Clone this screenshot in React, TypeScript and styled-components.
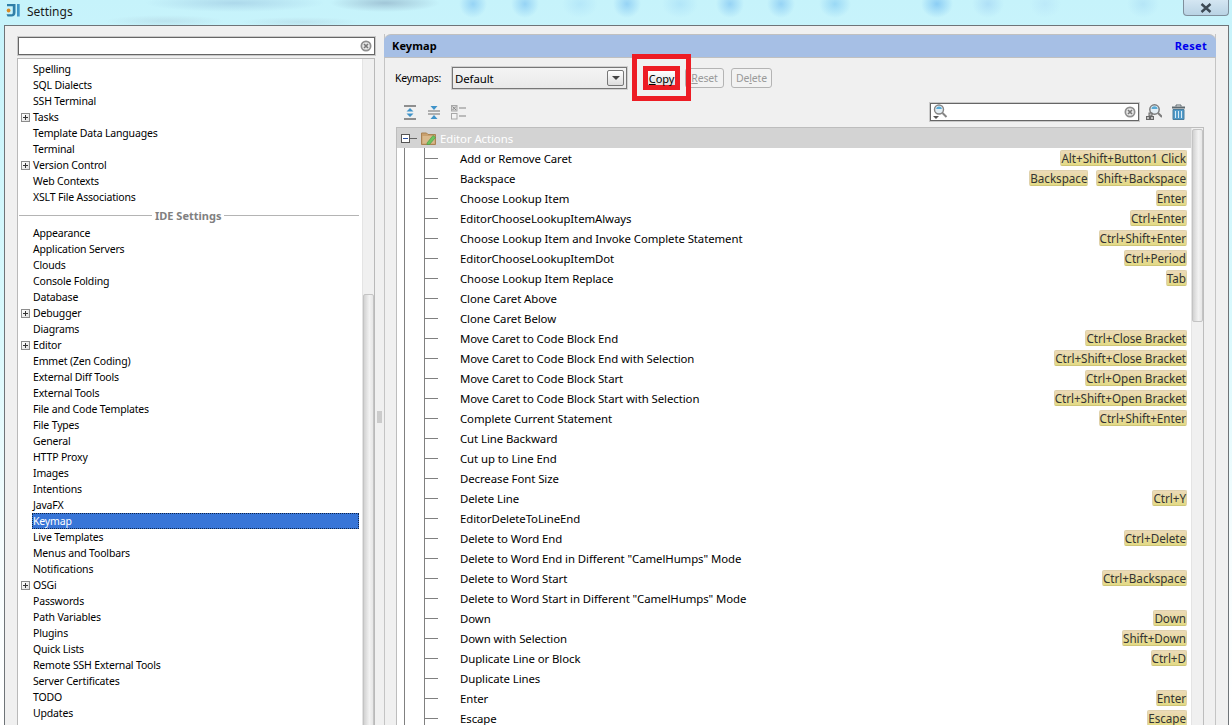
import React from 'react';
import styled, { createGlobalStyle } from 'styled-components';

const GlobalStyle = createGlobalStyle`
  html, body {
    margin: 0;
    padding: 0;
    background: #dff4fb;
  }
  * {
    box-sizing: border-box;
  }
`;

const Screen = styled.div`
  width: 1232px;
  height: 725px;
  overflow: hidden;
  display: flex;
  flex-direction: column;
  font-family: 'Noto Sans', Tahoma, sans-serif;
  font-size: 10.5px;
  letter-spacing: -0.17px;
  color: #000;
  background:
    radial-gradient(ellipse 14px 14px at 473px 4px, rgba(110, 185, 240, 0.55), transparent),
    radial-gradient(ellipse 14px 14px at 525px 4px, rgba(110, 185, 240, 0.55), transparent),
    radial-gradient(ellipse 18px 14px at 580px 4px, rgba(150, 210, 245, 0.35), transparent),
    radial-gradient(ellipse 14px 14px at 627px 4px, rgba(110, 185, 240, 0.55), transparent),
    radial-gradient(ellipse 18px 14px at 680px 4px, rgba(140, 205, 245, 0.35), transparent),
    radial-gradient(ellipse 14px 14px at 730px 4px, rgba(110, 185, 240, 0.55), transparent),
    radial-gradient(ellipse 14px 14px at 781px 4px, rgba(110, 185, 240, 0.55), transparent),
    radial-gradient(ellipse 16px 14px at 835px 4px, rgba(110, 190, 240, 0.5), transparent),
    radial-gradient(ellipse 16px 14px at 937px 4px, rgba(100, 180, 240, 0.6), transparent),
    radial-gradient(ellipse 16px 14px at 988px 4px, rgba(140, 195, 240, 0.4), transparent),
    radial-gradient(ellipse 16px 14px at 1045px 4px, rgba(170, 215, 245, 0.35), transparent),
    radial-gradient(ellipse 16px 14px at 1143px 4px, rgba(150, 205, 240, 0.35), transparent),
    radial-gradient(ellipse 60px 6px at 165px 21px, rgba(150, 170, 190, 0.22), transparent),
    radial-gradient(ellipse 60px 5px at 300px 22px, rgba(150, 170, 190, 0.22), transparent),
    radial-gradient(ellipse 90px 9px at 235px 3px, rgba(120, 160, 200, 0.32), transparent),
    radial-gradient(ellipse 55px 9px at 385px 3px, rgba(110, 135, 165, 0.42), transparent),
    linear-gradient(180deg, #c6f3fb 0%, #d9f9fd 45%, #f6fdfe 75%, #ffffff 100%);
`;

const TitleBar = styled.div`
  height: 25px;
  flex: none;
  display: flex;
  align-items: flex-start;
  padding-left: 6px;
`;

const LogoSlot = styled.span`
  margin-top: 4px;
  display: flex;
`;

const TitleText = styled.span`
  margin: 3px 0 0 6px;
  font-size: 12px;
  letter-spacing: 0;
  color: #1a1a1a;
`;

const CloseButton = styled.div`
  width: 46px;
  height: 16px;
  margin-left: auto;
  margin-right: 3px;
  border: 1px solid #7f8f9c;
  border-top: none;
  border-radius: 0 0 4px 4px;
  background: linear-gradient(180deg, #d4e6f2, #b9d3e4);
  display: flex;
  align-items: center;
  justify-content: center;
`;

const Dialog = styled.div`
  flex: 1;
  min-height: 0;
  margin: 0 3px 0 4px;
  padding: 8px 12px 0 13px;
  background: #f0f0f0;
  border: 1px solid #6f7478;
  border-bottom: none;
  display: flex;
`;

const LeftColumn = styled.div`
  width: 357px;
  flex: none;
  display: flex;
  flex-direction: column;
  margin-top: 3px;
`;

const SearchField = styled.div<{ $width?: number }>`
  height: 18px;
  width: ${(p) => (p.$width ? `${p.$width}px` : '100%')};
  flex: none;
  background: #fff;
  border: 1px solid #666;
  outline: 1px solid #c9c9c9;
  display: flex;
  align-items: center;
  justify-content: space-between;
  padding: 0 2px 0 1px;
`;

const TreeBox = styled.div`
  flex: 1;
  min-height: 0;
  margin-top: 3px;
  margin-left: -1px;
  border: 1px solid #b9b9b9;
  border-bottom: none;
  background: #fff;
  display: flex;
  overflow: hidden;
`;

const TreeList = styled.div`
  flex: 1;
  min-width: 0;
  padding: 2px 3px 0 1px;
`;

const TreeItem = styled.div`
  height: 16px;
  line-height: 17px;
  display: flex;
  align-items: center;
  white-space: nowrap;
`;

const ExpanderSlot = styled.span`
  width: 13px;
  flex: none;
  display: flex;
  justify-content: center;
`;

const Expander = styled.span`
  width: 9px;
  height: 9px;
  border: 1px solid #8c8c8c;
  background: linear-gradient(135deg, #fff, #dfdfdf);
  position: relative;
  &::before {
    content: '';
    position: absolute;
    left: 1px;
    right: 1px;
    top: 3px;
    height: 1px;
    background: #333;
  }
  &::after {
    content: '';
    position: absolute;
    top: 1px;
    bottom: 1px;
    left: 3px;
    width: 1px;
    background: #333;
  }
`;

const ItemLabel = styled.span<{ $selected?: boolean }>`
  flex: 1;
  height: 16px;
  padding-left: 1px;
  color: ${(p) => (p.$selected ? '#fff' : '#000')};
  background: ${(p) => (p.$selected ? '#3875d7' : 'transparent')};
  outline: ${(p) => (p.$selected ? '1px dotted #10254a' : 'none')};
  outline-offset: -1px;
`;

const SectionRow = styled.div`
  height: 20px;
  display: flex;
  align-items: center;
  gap: 3px;
  font-size: 11px;
  letter-spacing: 0;
  font-weight: 700;
  color: #808080;
  &::before,
  &::after {
    content: '';
    height: 1px;
    background: #b4b4b4;
  }
  &::before {
    width: 133px;
  }
  &::after {
    flex: 1;
  }
`;

const VScroll = styled.div<{ $thumbTop: number; $thumbHeight: number }>`
  width: 12px;
  flex: none;
  background: #f0f0f0;
  border-left: 1px solid #e4e4e4;
  padding-top: ${(p) => p.$thumbTop}px;
  &::before {
    content: '';
    display: block;
    height: ${(p) => p.$thumbHeight}px;
    border: 1px solid #c4c4c4;
    border-radius: 2px;
    background: linear-gradient(90deg, #d2d2d2, #f2f2f2 60%, #e6e6e6);
  }
`;

const Splitter = styled.div`
  width: 9px;
  flex: none;
  padding-top: 74px;
  display: flex;
  align-items: center;
  justify-content: center;
`;

const Grip = styled.span`
  width: 5px;
  height: 12px;
  background-image: radial-gradient(circle, #a0a0a0 0.6px, transparent 0.8px);
  background-size: 2px 2px;
`;

const Panel = styled.div`
  flex: 1;
  min-width: 0;
  display: flex;
  flex-direction: column;
  border-right: 1px solid #c4c4c4;
  border-left: 1px solid #c4c4c4;
`;

const PanelHeader = styled.div`
  height: 24px;
  flex: none;
  margin: 0 -1px;
  padding: 0 9px 2px 8px;
  display: flex;
  align-items: center;
  justify-content: space-between;
  background: #a6bfe5;
  border-top: 1px solid #c0c0c0;
  border-bottom: 1px solid #c0c0c0;
  border-radius: 7px 7px 0 0;
  font-size: 11px;
  letter-spacing: 0.1px;
  font-weight: 700;
`;

const ResetLink = styled.span`
  color: #0000ee;
  letter-spacing: 0.3px;
`;

const PanelBody = styled.div`
  flex: 1;
  min-height: 0;
  padding: 8px 11px 0 11px;
  display: flex;
  flex-direction: column;
`;

const KeymapRow = styled.div`
  height: 24px;
  flex: none;
  display: flex;
  align-items: center;
`;

const KeymapLabel = styled.span`
  width: 56px;
  flex: none;
  margin-left: -1px;
  margin-right: 1px;
`;

const ComboBox = styled.div`
  width: 175px;
  height: 22px;
  flex: none;
  border: 1px solid #777;
  outline: 1px solid #d0d0d0;
  background: linear-gradient(180deg, #f4f4f4, #e9e9e9);
  display: flex;
  align-items: center;
  justify-content: space-between;
  padding: 0 2px 0 2px;
  font-size: 11.4px;
  letter-spacing: -0.08px;
`;

const ComboArrow = styled.span`
  width: 17px;
  height: 16px;
  border: 1px solid #777;
  border-radius: 2px;
  background: linear-gradient(180deg, #fff, #dcdcdc);
  display: flex;
  align-items: center;
  justify-content: center;
  &::before {
    content: '';
    border: 4px solid transparent;
    border-top: 4px solid #444;
    border-bottom: none;
  }
`;

const ActionButton = styled.span<{ $width: number }>`
  width: ${(p) => p.$width}px;
  height: 20px;
  flex: none;
  display: flex;
  align-items: center;
  justify-content: center;
  border: 1px solid #b4b4b4;
  border-radius: 3px;
  color: #9a9a9a;
  background: #f2f2f2;
  & + & {
    margin-left: 7px;
  }
`;

const CopyHighlight = styled.span`
  position: relative;
  width: 37px;
  height: 24px;
  margin: 0 5px 0 16px;
  flex: none;
  display: flex;
  align-items: center;
  justify-content: center;
  border: 5px solid #ed1c24;
  background: linear-gradient(180deg, #ffffff, #dedede);
  font-size: 11px;
  letter-spacing: -0.1px;
  &::after {
    content: '';
    position: absolute;
    left: -16px;
    right: -16px;
    top: -17px;
    bottom: -16px;
    border: 5px solid #ed1c24;
    pointer-events: none;
  }
`;

const ToolRow = styled.div`
  height: 33px;
  flex: none;
  display: flex;
  align-items: center;
  padding: 11px 0 0 7px;
`;

const ToolGroup = styled.div`
  display: flex;
  align-items: center;
  gap: 10px;
`;

const FilterGroup = styled.div`
  margin-left: auto;
  margin-right: 18px;
  display: flex;
  align-items: center;
  gap: 7px;
  svg:last-child {
    margin-left: 2px;
  }
`;

const Table = styled.div`
  flex: 1;
  min-height: 0;
  margin-top: 4px;
  border: 1px solid #bdbdbd;
  border-bottom: none;
  background: #fff;
  display: flex;
  overflow: hidden;
`;

const TableList = styled.div`
  flex: 1;
  min-width: 0;
`;

const RootRow = styled.div`
  height: 20px;
  display: flex;
  align-items: center;
  background: #d3d3d3;
  color: #fff;
  font-size: 11.4px;
  letter-spacing: -0.08px;
  padding-left: 4px;
`;

const RootExpander = styled.span`
  width: 9px;
  height: 9px;
  flex: none;
  border: 1px solid #555;
  background: #fff;
  display: flex;
  align-items: center;
  justify-content: center;
  &::before {
    content: '';
    width: 5px;
    height: 1px;
    background: #2a4fa0;
  }
`;

const RootTick = styled.span`
  width: 7px;
  height: 1px;
  flex: none;
  background: #666;
  margin-right: 4px;
`;

const RootLabel = styled.span`
  margin-left: 4px;
`;

const ActionRow = styled.div`
  height: 20px;
  display: flex;
  align-items: center;
  font-size: 11.4px;
  letter-spacing: -0.08px;
  white-space: nowrap;
`;

const Guide = styled.span`
  width: 20px;
  height: 20px;
  flex: none;
  margin-left: 7px;
  border-left: 1px solid #808080;
`;

const Branch = styled.span`
  width: 36px;
  height: 20px;
  flex: none;
  border-left: 1px solid #808080;
  position: relative;
  &::after {
    content: '';
    position: absolute;
    left: 0;
    top: 10px;
    width: 13px;
    height: 1px;
    background: #808080;
  }
`;

const ActionName = styled.span`
  flex: 1;
`;

const Shortcuts = styled.span`
  display: flex;
  gap: 8px;
  padding-right: 4px;
  font-size: 11.7px;
  letter-spacing: -0.04px;
`;

const Shortcut = styled.span`
  height: 16px;
  line-height: 14px;
  color: #333;
  background: linear-gradient(180deg, #ecdab8, #e3da85);
  border: 1px solid #e0d2ac;
  border-bottom-color: #cfc678;
  border-radius: 2px;
`;

const ClearIcon = () => (
  <svg width="12" height="12" viewBox="0 0 12 12">
    <circle cx="6" cy="6" r="5.5" fill="#8f8f8f" />
    <circle cx="6" cy="6" r="3.8" fill="#e8e8e8" />
    <path d="M4 4l4 4M8 4l-4 4" stroke="#777" strokeWidth="1.6" />
  </svg>
);

const AppLogo = () => (
  <svg width="15" height="13" viewBox="0 0 15 13">
    <path d="M1 0h8.500v8.500c0 2.500-1.500 4-4 4H1.500l-1-2.200h4.500c1.300 0 1.800-.7 1.800-1.900V2.200H1z" fill="#2f7fa8" />
    <path d="M11 0h2.700v12.500H11z" fill="#3f97c8" />
    <circle cx="2.600" cy="6.500" r="1.900" fill="#d98a24" />
  </svg>
);

const ExpandAllIcon = () => (
  <svg width="14" height="15" viewBox="0 0 14 15">
    <path d="M1 1h12M1 14h12" stroke="#6e6e6e" strokeWidth="1.6" />
    <path d="M7 3l3.500 3.500h-7zM7 12L3.500 8.500h7z" fill="#3f93c9" />
  </svg>
);

const CollapseAllIcon = () => (
  <svg width="14" height="15" viewBox="0 0 14 15">
    <path d="M1 6h12M1 9h12" stroke="#6e6e6e" strokeWidth="1.2" />
    <path d="M7 5L3.500 1h7zM7 10l3.500 4h-7z" fill="#3f93c9" />
  </svg>
);

const SelectionIcon = () => (
  <svg width="15" height="15" viewBox="0 0 15 15">
    <rect x="0.500" y="0.500" width="5.500" height="5.500" fill="#d8d8d8" stroke="#a8a8a8" />
    <path d="M1.500 1.500l3.500 3.500M5 1.500L1.500 5" stroke="#8a8a8a" />
    <rect x="0.500" y="8.500" width="5.500" height="5.500" fill="#f4f4f4" stroke="#a8a8a8" />
    <path d="M8 3h7M8 11h7" stroke="#a8a8a8" strokeWidth="1.600" />
  </svg>
);

const FolderIcon = () => (
  <svg width="15" height="13" viewBox="0 0 15 13">
    <path d="M0.500 1h5l1.500 1.500h7.500v10H0.500z" fill="#c9a06e" stroke="#a98252" />
    <path d="M1.500 4h12v7.500h-12z" fill="#d9b98c" />
    <path d="M6 11l6-7.500 2.500 2-6 7H6z" fill="#6cc45e" stroke="#3f9a46" strokeWidth="0.600" />
  </svg>
);

const LensIcon = () => (
  <svg width="16" height="16" viewBox="0 0 16 16">
    <circle cx="7" cy="5.500" r="4.500" fill="#e4eef4" stroke="#858585" strokeWidth="1.400" />
    <path d="M4.200 5a2.800 2.500 0 0 1 5.600 0z" fill="#58aad6" />
    <path d="M10.500 9l4 4" stroke="#858585" strokeWidth="2" />
    <path d="M1 12h6l-3 3z" fill="#555" />
  </svg>
);

const FindShortcutIcon = () => (
  <svg width="16" height="16" viewBox="0 0 16 16">
    <circle cx="8.500" cy="5.500" r="4.700" fill="#e4eef4" stroke="#7c7c7c" strokeWidth="1.500" />
    <path d="M5.500 5a3 2.800 0 0 1 6 0z" fill="#58aad6" />
    <path d="M12 9l4 4" stroke="#7c7c7c" strokeWidth="2" />
    <rect x="3" y="9" width="3" height="3" fill="#bdbdbd" stroke="#666" />
    <rect x="0.500" y="12.500" width="3" height="3" fill="#bdbdbd" stroke="#666" />
    <rect x="4.500" y="12.500" width="3" height="3" fill="#bdbdbd" stroke="#666" />
  </svg>
);

const TrashIcon = () => (
  <svg width="15" height="16" viewBox="0 0 15 16">
    <path d="M1 3.500h13" stroke="#5f6a70" strokeWidth="2" />
    <path d="M5 2.500V1h5v1.500" fill="none" stroke="#5f6a70" />
    <path d="M2 5.500h11v10H2z" fill="#4f9ac9" stroke="#4b7d9c" />
    <path d="M4.500 7v7M7.500 7v7M10.500 7v7" stroke="#d8eaf5" />
  </svg>
);

const CloseGlyph = () => (
  <svg width="12" height="10" viewBox="0 0 12 10">
    <path d="M1.500 1l9 8M10.500 1l-9 8" stroke="#3d4a55" strokeWidth="2.400" />
  </svg>
);

type TreeEntry = { label: string; expandable?: boolean };

const projectItems: TreeEntry[] = [
  { label: 'Spelling' },
  { label: 'SQL Dialects' },
  { label: 'SSH Terminal' },
  { label: 'Tasks', expandable: true },
  { label: 'Template Data Languages' },
  { label: 'Terminal' },
  { label: 'Version Control', expandable: true },
  { label: 'Web Contexts' },
  { label: 'XSLT File Associations' },
];

const ideItems: TreeEntry[] = [
  { label: 'Appearance' },
  { label: 'Application Servers' },
  { label: 'Clouds' },
  { label: 'Console Folding' },
  { label: 'Database' },
  { label: 'Debugger', expandable: true },
  { label: 'Diagrams' },
  { label: 'Editor', expandable: true },
  { label: 'Emmet (Zen Coding)' },
  { label: 'External Diff Tools' },
  { label: 'External Tools' },
  { label: 'File and Code Templates' },
  { label: 'File Types' },
  { label: 'General' },
  { label: 'HTTP Proxy' },
  { label: 'Images' },
  { label: 'Intentions' },
  { label: 'JavaFX' },
  { label: 'Keymap' },
  { label: 'Live Templates' },
  { label: 'Menus and Toolbars' },
  { label: 'Notifications' },
  { label: 'OSGi', expandable: true },
  { label: 'Passwords' },
  { label: 'Path Variables' },
  { label: 'Plugins' },
  { label: 'Quick Lists' },
  { label: 'Remote SSH External Tools' },
  { label: 'Server Certificates' },
  { label: 'TODO' },
  { label: 'Updates' },
];

const actions: { name: string; keys?: string[] }[] = [
  { name: 'Add or Remove Caret', keys: ['Alt+Shift+Button1 Click'] },
  { name: 'Backspace', keys: ['Backspace', 'Shift+Backspace'] },
  { name: 'Choose Lookup Item', keys: ['Enter'] },
  { name: 'EditorChooseLookupItemAlways', keys: ['Ctrl+Enter'] },
  { name: 'Choose Lookup Item and Invoke Complete Statement', keys: ['Ctrl+Shift+Enter'] },
  { name: 'EditorChooseLookupItemDot', keys: ['Ctrl+Period'] },
  { name: 'Choose Lookup Item Replace', keys: ['Tab'] },
  { name: 'Clone Caret Above' },
  { name: 'Clone Caret Below' },
  { name: 'Move Caret to Code Block End', keys: ['Ctrl+Close Bracket'] },
  { name: 'Move Caret to Code Block End with Selection', keys: ['Ctrl+Shift+Close Bracket'] },
  { name: 'Move Caret to Code Block Start', keys: ['Ctrl+Open Bracket'] },
  { name: 'Move Caret to Code Block Start with Selection', keys: ['Ctrl+Shift+Open Bracket'] },
  { name: 'Complete Current Statement', keys: ['Ctrl+Shift+Enter'] },
  { name: 'Cut Line Backward' },
  { name: 'Cut up to Line End' },
  { name: 'Decrease Font Size' },
  { name: 'Delete Line', keys: ['Ctrl+Y'] },
  { name: 'EditorDeleteToLineEnd' },
  { name: 'Delete to Word End', keys: ['Ctrl+Delete'] },
  { name: 'Delete to Word End in Different "CamelHumps" Mode' },
  { name: 'Delete to Word Start', keys: ['Ctrl+Backspace'] },
  { name: 'Delete to Word Start in Different "CamelHumps" Mode' },
  { name: 'Down', keys: ['Down'] },
  { name: 'Down with Selection', keys: ['Shift+Down'] },
  { name: 'Duplicate Line or Block', keys: ['Ctrl+D'] },
  { name: 'Duplicate Lines' },
  { name: 'Enter', keys: ['Enter'] },
  { name: 'Escape', keys: ['Escape'] },
];

const renderTreeItem = (item: TreeEntry) => (
  <TreeItem key={item.label}>
    <ExpanderSlot>{item.expandable && <Expander />}</ExpanderSlot>
    <ItemLabel $selected={item.label === 'Keymap'}>{item.label}</ItemLabel>
  </TreeItem>
);

const App: React.FC = () => {
  return (
    <>
      <GlobalStyle />
      <Screen>
        <TitleBar>
          <LogoSlot>
            <AppLogo />
          </LogoSlot>
          <TitleText>Settings</TitleText>
          <CloseButton>
            <CloseGlyph />
          </CloseButton>
        </TitleBar>
        <Dialog>
          <LeftColumn>
            <SearchField>
              <span />
              <ClearIcon />
            </SearchField>
            <TreeBox>
              <TreeList>
                {projectItems.map(renderTreeItem)}
                <SectionRow>IDE Settings</SectionRow>
                {ideItems.map(renderTreeItem)}
              </TreeList>
              <VScroll $thumbTop={235} $thumbHeight={500} />
            </TreeBox>
          </LeftColumn>
          <Splitter>
            <Grip />
          </Splitter>
          <Panel>
            <PanelHeader>
              <span>Keymap</span>
              <ResetLink>Reset</ResetLink>
            </PanelHeader>
            <PanelBody>
              <KeymapRow>
                <KeymapLabel>Keymaps:</KeymapLabel>
                <ComboBox>
                  Default
                  <ComboArrow />
                </ComboBox>
                <CopyHighlight>
                  <span>
                    <u>C</u>opy
                  </span>
                </CopyHighlight>
                <ActionButton $width={39}>
                  <span>
                    <u>R</u>eset
                  </span>
                </ActionButton>
                <ActionButton $width={41}>
                  <span>
                    De<u>l</u>ete
                  </span>
                </ActionButton>
              </KeymapRow>
              <ToolRow>
                <ToolGroup>
                  <ExpandAllIcon />
                  <CollapseAllIcon />
                  <SelectionIcon />
                </ToolGroup>
                <FilterGroup>
                  <SearchField $width={209}>
                    <LensIcon />
                    <ClearIcon />
                  </SearchField>
                  <FindShortcutIcon />
                  <TrashIcon />
                </FilterGroup>
              </ToolRow>
              <Table>
                <TableList>
                  <RootRow>
                    <RootExpander />
                    <RootTick />
                    <FolderIcon />
                    <RootLabel>Editor Actions</RootLabel>
                  </RootRow>
                  {actions.map((action) => (
                    <ActionRow key={action.name}>
                      <Guide />
                      <Branch />
                      <ActionName>{action.name}</ActionName>
                      {action.keys && (
                        <Shortcuts>
                          {action.keys.map((k) => (
                            <Shortcut key={k}>{k}</Shortcut>
                          ))}
                        </Shortcuts>
                      )}
                    </ActionRow>
                  ))}
                </TableList>
                <VScroll $thumbTop={1} $thumbHeight={191} />
              </Table>
            </PanelBody>
          </Panel>
        </Dialog>
      </Screen>
    </>
  );
};

export default App;
